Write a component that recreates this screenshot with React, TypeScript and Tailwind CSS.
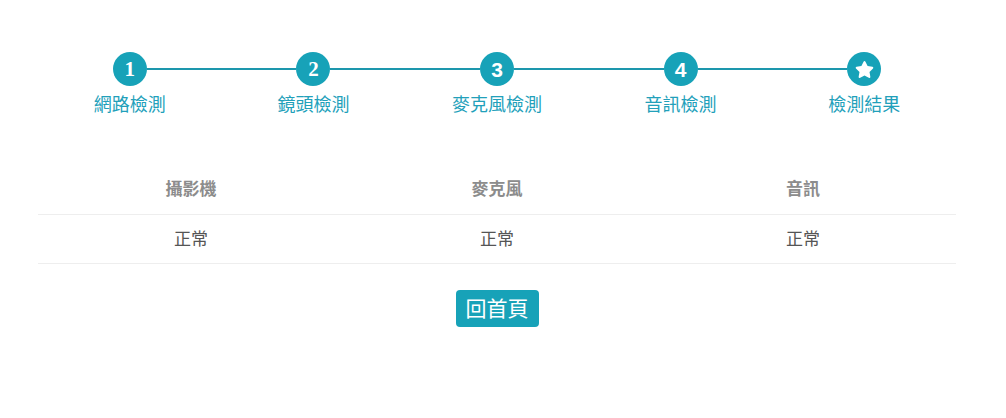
import React from "react";
import { FaStar } from "react-icons/fa";

const steps = [
  { label: "網路檢測", num: "1", serif: true },
  { label: "鏡頭檢測", num: "2", serif: true },
  { label: "麥克風檢測", num: "3", serif: false },
  { label: "音訊檢測", num: "4", serif: false },
  { label: "檢測結果", num: "star", serif: false },
];

const cols = [
  { head: "攝影機", val: "正常" },
  { head: "麥克風", val: "正常" },
  { head: "音訊", val: "正常" },
];

export default function App() {
  return (
    <div
      className="w-[1006px] h-[418px] bg-white pt-[52px]"
      style={{ fontFamily: '"Liberation Sans", "Noto Sans CJK TC", sans-serif' }}
    >
      <div className="ml-[38px] w-[918px]">
        <div className="grid grid-cols-5">
          {steps.map((s, i) => (
            <div key={i} className="flex flex-col items-center">
              <div className="flex w-full items-center">
                <div className={`h-[2px] flex-1 ${i === 0 ? "bg-transparent" : "bg-[#1d97ad]"}`} />
                <div className="flex h-[34px] w-[34px] items-center justify-center rounded-full bg-[#17a2b8] text-white">
                  {s.num === "star" ? (
                    <FaStar className="h-[19px] w-[19px]" />
                  ) : (
                    <span
                      className="text-[21px] font-bold leading-none"
                      style={{
                        fontFamily: s.serif
                          ? '"Liberation Serif", serif'
                          : '"Liberation Sans", sans-serif',
                      }}
                    >
                      {s.num}
                    </span>
                  )}
                </div>
                <div className={`h-[2px] flex-1 ${i === steps.length - 1 ? "bg-transparent" : "bg-[#1d97ad]"}`} />
              </div>
              <div className="mt-[6px] text-[18px] leading-[26px] text-[#22a0ba]">{s.label}</div>
            </div>
          ))}
        </div>

        <div className="mt-[48px]">
          <div className="grid grid-cols-3 border-b border-[#eeeeee]">
            {cols.map((c) => (
              <div key={c.head} className="py-3 text-center text-[17px] font-bold leading-6 text-[#8c8c8c]">
                {c.head}
              </div>
            ))}
          </div>
          <div className="grid grid-cols-3 border-b border-[#eeeeee]">
            {cols.map((c) => (
              <div key={c.head} className="pt-[13px] pb-[11px] text-center text-[17px] leading-6 text-[#555555]">
                {c.val}
              </div>
            ))}
          </div>
        </div>

        <div className="mt-[26px] flex justify-center">
          <button className="flex h-[37px] w-[83px] items-center justify-center rounded-[4px] bg-[#17a2b8] text-[21px] text-white">
            回首頁
          </button>
        </div>
      </div>
    </div>
  );
}
